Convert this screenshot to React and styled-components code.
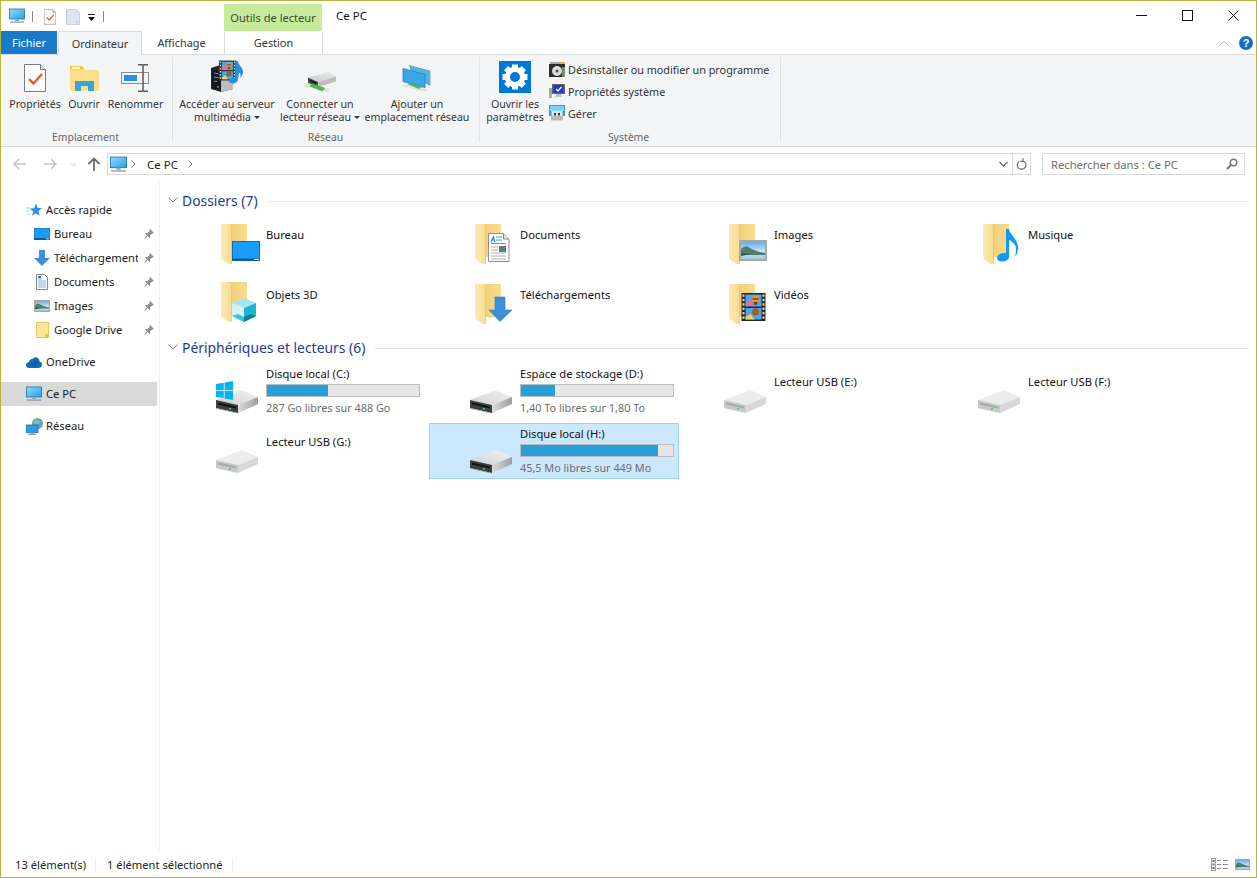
import React from 'react';
import styled, { createGlobalStyle } from 'styled-components';

const Global = createGlobalStyle`
  html, body { margin: 0; padding: 0; background: #fff; }
  body { font-family: "Noto Sans", "Open Sans", sans-serif; font-size: 11.2px; color: #111; }
  * { box-sizing: border-box; }
`;

const Win = styled.div`
  width: 1257px; height: 878px; border: 1px solid #b3b83c; display: flex; flex-direction: column; background: #fff; overflow: hidden;
`;
const TitleBar = styled.div`display: flex; height: 30px; align-items: stretch; flex: none;`;
const Qat = styled.div`display: flex; align-items: center; width: 223px; padding-left: 8px; flex: none;`;
const QatIcon = styled.span`display: flex; margin-left: ${p => p.$ml || 0}px; margin-top: ${p => p.$mt || 0}px;`;
const QatSep = styled.span`width: 1px; height: 11px; background: #8a8a8a; margin-left: ${p => p.$ml}px;`;
const ContextCap = styled.div`
  margin-top: 3px; width: 98px; background: #c5eb9b; color: #3f4a33; display: flex; align-items: center; justify-content: center; font-size: 11.1px; flex: none; padding-bottom: 1px;
`;
const TitleText = styled.div`margin-left: 14px; font-size: 11.5px; color: #111; display: flex; align-items: center; flex: 1; padding-bottom: 1px;`;
const WinBtn = styled.div`width: 46px; display: flex; align-items: center; justify-content: center; flex: none; padding-bottom: 2px;`;

const TabRow = styled.div`display: flex; height: 24px; flex: none; border-bottom: 1px solid #dadbdc; position: relative; align-items: stretch; font-size: 10.9px;`;
const FileTab = styled.div`width: 56px; height: 23px; background: #1979ca; color: #fff; display: flex; align-items: center; justify-content: center; flex: none; padding-bottom: 1px;`;
const Tab = styled.div`
  width: ${p => p.$w}px; margin-left: ${p => p.$ml || 0}px; display: flex; align-items: center; justify-content: center; color: #333; flex: none; padding: 0 ${p => p.$pr || 0}px 1px 0;
  height: ${p => p.$active ? 24 : 23}px; z-index: 1;
  background: ${p => p.$active ? '#f4f5f7' : '#fff'};
  border: 1px solid ${p => p.$active || p.$frame ? '#dadbdc' : 'transparent'};
  border-top-color: ${p => p.$active ? '#dadbdc' : 'transparent'};
  border-bottom: none;
`;
const TabEnd = styled.div`margin-left: auto; display: flex; align-items: center; gap: 10px; padding-right: 3px; height: 23px;`;

const Ribbon = styled.div`display: flex; height: 92px; flex: none; background: #f4f5f7; border-bottom: 1px solid #dadbdc;`;
const Group = styled.div`
  width: ${p => p.$w}px; flex: none; display: flex; flex-direction: column; position: relative; padding: 5px 0 0 ${p => p.$pl}px;
  &::after { content: ""; position: absolute; right: 0; top: 2px; bottom: 4px; width: 1px; background: #e2e3e4; }
`;
const GroupBody = styled.div`display: flex; flex: 1;`;
const GroupLabel = styled.div`height: 16px; margin-left: -${p => p.$pl}px; padding-right: ${p => p.$pr}px; text-align: center; color: #666; font-size: 10.4px; line-height: 14px;`;
const BigBtn = styled.div`width: ${p => p.$w}px; flex: none; display: flex; flex-direction: column; align-items: center; color: #333;`;
const BigIcon = styled.div`height: ${p => 32 + (p.$drop || 0)}px; margin-bottom: ${p => 6 - (p.$drop || 0)}px; display: flex; align-items: flex-end; justify-content: center;`;
const BigLabel = styled.div`font-size: 10.6px; line-height: 13px; text-align: center; white-space: nowrap;`;
const Caret = styled.span`display: inline-block; width: 0; height: 0; border: 3px solid transparent; border-top: 3px solid #333; border-bottom: none; margin-left: 3px; vertical-align: 2px;`;
const SmallList = styled.div`display: flex; flex-direction: column; margin-top: -2px; margin-left: 4px;`;
const SmallRow = styled.div`display: flex; align-items: center; height: 22px; gap: 3px; color: #333; font-size: 10.8px; white-space: nowrap;`;

const AddressBar = styled.div`display: flex; height: 34px; flex: none; align-items: center; padding: 0 12px 0 12px;`;
const Nav = styled.div`width: 94px; display: flex; align-items: center; flex: none; height: 22px;`;
const NavBtn = styled.span`display: flex; flex: none; width: ${p => p.$w}px; margin-left: ${p => p.$ml || 0}px; justify-content: center;`;
const Breadcrumb = styled.div`
  width: 924px; height: 22px; border: 1px solid #d9d9d9; display: flex; align-items: center; padding-left: 1px; flex: none; color: #222; font-size: 11.5px;
`;
const Crumb = styled.span`margin: 0 ${p => p.$mr || 0}px 0 ${p => p.$ml || 0}px; display: flex; align-items: center;`;
const BreadEnd = styled.div`margin-left: auto; display: flex; align-items: center; height: 100%;`;
const BreadDrop = styled.span`width: 18px; display: flex; justify-content: center; padding-left: 1px;`;
const BreadRefresh = styled.span`width: 18px; height: 100%; border-left: 1px solid #d9d9d9; display: flex; align-items: center; justify-content: center;`;
const Search = styled.div`
  margin-left: 11px; width: 203px; height: 22px; border: 1px solid #d9d9d9; display: flex; align-items: center; justify-content: space-between; padding: 0 6px 0 8px; color: #6d6d6d; flex: none;
`;

const Main = styled.div`flex: 1; display: flex; min-height: 0;`;
const Sidebar = styled.nav`width: 159px; flex: none; border-right: 1px solid #f0f0f0; padding: 17px 2px 0 0; display: flex; flex-direction: column;`;
const SideRow = styled.div`
  height: 24px; flex: none; display: flex; align-items: center; padding-left: ${p => p.$sub ? 32 : 24}px; padding-right: 3px;
  gap: 3px; margin-top: ${p => p.$gap || 0}px; background: ${p => p.$sel ? '#d9d9d9' : 'transparent'}; color: #1a1a1a;
`;
const SideIcon = styled.span`width: 18px; height: 18px; display: flex; align-items: center; justify-content: center; flex: none;`;
const SideLabel = styled.span`flex: 1; overflow: hidden; white-space: nowrap; min-width: 0; padding-bottom: 2px;`;
const PinBox = styled.span`width: 10px; flex: none; display: flex; margin-left: 3px;`;

const Content = styled.main`flex: 1; padding: 9px 7px 0 0; min-width: 0;`;
const SectionHead = styled.div`
  height: 20px; display: flex; align-items: center; padding-left: 8px; margin-top: ${p => p.$mt || 0}px; color: #1e3a94; font-size: 13.9px; white-space: nowrap;
  span { margin-left: 4px; }
  &::after { content: ""; flex: 1; height: 1px; background: #e5e5e5; margin-left: 10px; margin-top: 2px; }
`;
const Grid = styled.div`display: grid; grid-template-columns: repeat(4, 250px); gap: 4px; padding: 6px 0 0 15px;`;
const Tile = styled.div`
  height: 56px; display: flex; padding: 3px 0 0 38px; gap: 4px; border: 1px solid ${p => p.$sel ? '#99d1ff' : 'transparent'};
  background: ${p => p.$sel ? '#cce8ff' : 'transparent'};
`;
const TileIcon = styled.div`width: 48px; height: 48px; flex: none;`;
const TileText = styled.div`margin-top: ${p => p.$top}px; line-height: 16px; color: #111; min-width: 0; white-space: nowrap;`;
const Bar = styled.div`width: 154px; height: 13px; border: 1px solid #bcbcbc; background: #e6e6e6; margin: 2px 0 3px; display: flex;`;
const BarFill = styled.div`height: 100%; background: #26a0da;`;
const Free = styled.div`color: #6d6d6d; line-height: 15px; font-size: 10.85px;`;

const StatusBar = styled.div`height: 24px; flex: none; display: flex; align-items: center; padding: 0 6px 2px 14px; color: #222;`;
const StatusItem = styled.span`padding-right: ${p => p.$pr}px; margin-right: ${p => p.$mr}px; position: relative; white-space: nowrap;
  &::after { content: ""; position: absolute; right: 0; top: 1px; bottom: 1px; width: 1px; background: #ececec; }
`;
const ViewIcons = styled.div`margin-left: auto; display: flex; gap: 7px; align-items: center;`;

/* ---------- drawings ---------- */
const Pc = ({ s = 16 }) => (
  <svg width={s} height={s} viewBox="0 0 16 16">
    <defs><linearGradient id="pcg" x1="0" y1="0" x2="1" y2="1"><stop offset="0" stopColor="#8fdcfb" /><stop offset="1" stopColor="#2a9fe6" /></linearGradient></defs>
    <rect x="0.5" y="1" width="15" height="10" fill="url(#pcg)" stroke="#1c6f9e" strokeWidth="0.8" />
    <rect x="6" y="11" width="4" height="2" fill="#9aa4ab" />
    <rect x="1" y="13.5" width="14" height="1.2" fill="#7f98a8" />
  </svg>
);
const CheckDoc = ({ w = 22, h = 28 }) => (
  <svg width={w} height={h} viewBox="0 0 22 28">
    <path d="M.5.5h16l5 5v22H.5z" fill="#fdfdfd" stroke="#7b7b7b" />
    <path d="M16.5.5v5h5" fill="#e6e6e6" stroke="#7b7b7b" />
    <path d="M5 15l4.5 4.5L18 10" fill="none" stroke="#ea5a25" strokeWidth="2.4" />
  </svg>
);
const BlankDoc = () => (
  <svg width="14" height="16" viewBox="0 0 14 16"><path d="M.5.5h10l3 3v12H.5z" fill="#dbe5f3" stroke="#c5d0e0" /><path d="M10 16v-4h4" fill="#c9d6e8" /></svg>
);
const OpenFolder = () => (
  <svg width="29" height="26" viewBox="0 0 29 26">
    <path d="M0 2h11l2 2h16v21H0z" fill="#fbe08c" />
    <path d="M0 0h12l3 3.5H0z" fill="#f4c83f" />
    <rect x="2" y="1" width="8" height="2" fill="#fff6d0" />
    <path d="M5 25v-10h19v10h-6v-5h-7v5z" fill="#37a6dc" />
  </svg>
);
const Rename = () => (
  <svg width="29" height="28" viewBox="0 0 29 28">
    <rect x="0.5" y="8.5" width="27" height="11" fill="#f7f7f7" stroke="#8a8a8a" />
    <rect x="3" y="11" width="13" height="6" fill="#2a8fe6" />
    <path d="M17 .8h4.2l.8.9.8-.9H27M22 2v24M17 27.2h4.2l.8-.9.8.9H27" fill="none" stroke="#5a5a5a" strokeWidth="1.5" />
  </svg>
);
const Film = ({ x, y, w, h }) => {
  const holes = [];
  for (let i = 0; i < 6; i++) holes.push(<rect key={i} x={1} y={1.4 + i * 4.4} width={2} height={2.4} fill="#d8d3c4" />, <rect key={'r' + i} x={21} y={1.4 + i * 4.4} width={2} height={2.4} fill="#d8d3c4" />);
  return (
    <svg x={x} y={y} width={w} height={h} viewBox="0 0 24 28">
      <rect width="24" height="28" fill="#262626" />
      {holes}
      <rect x="4" y="1.5" width="16" height="12" fill="#4aa8e8" />
      <rect x="4" y="15" width="16" height="11.5" fill="#4aa8e8" />
      <path d="M4 10l5-3 5 6H4z" fill="#e86d9a" />
      <circle cx="14" cy="6" r="3.6" fill="#e0a020" /><path d="M11 5h6v2h-6z" fill="#c83a20" />
      <path d="M12 9h4l-1.2 3h-1.6z" fill="#5a3a10" />
      <circle cx="14" cy="19" r="3.6" fill="#dd3a20" /><path d="M11 18h6v2h-6z" fill="#20a040" />
      <path d="M4 24l5-3 4 5.5H4z" fill="#f0d060" />
    </svg>
  );
};
const Media = () => (
  <svg width="33" height="32" viewBox="0 0 33 32">
    <path d="M0 8l9-3 13 4v20l-12 3-10-3z" fill="#23272e" />
    <path d="M10 10l12-1v20l-12 3z" fill="#b9bcc1" />
    <path d="M1 10l9 2v19l-9-3z" fill="#14171c" />
    <path d="M3 13l5 1M3 17l5 1M3 21l3 .6" stroke="#3aa0ea" strokeWidth="1" />
    <circle cx="7" cy="27" r=".9" fill="#3aa0ea" />
    <Film x={8} y={0} w={17} h={21} />
    <path d="M27 1c0 4 5 6 5 11 0 3-2 5-3 6 .6-2 1-4-.8-5.500L27 19c0 3-3 4.500-5.500 4.500-2 0-3.500-1-3.500-2.500 0-2.500 3-4 6-3.500l.3-16.500z" fill="#1f94e6" />
  </svg>
);
const IsoDrive = () => (
  <svg width="32" height="20" viewBox="0 0 32 20">
    <defs><linearGradient id="isot" x1="0" y1="1" x2="1" y2="0"><stop offset="0" stopColor="#c9caca" /><stop offset="1" stopColor="#ececec" /></linearGradient></defs>
    <path d="M4 5.500L24 0l8 4.500-18 5.500z" fill="url(#isot)" />
    <path d="M14 10l18-5.500v5L14 15z" fill="#bdbebe" />
    <path d="M4 5.500L14 10v5L4 11z" fill="#4a4e4e" />
    <path d="M5.500 7.500l7 3v1.500l-7-3z" fill="#161616" />
    <path d="M0 13.500l3-1.500 3 1 14 4 3-1 3 1.500-2.500 2.500-3-1-2.500.8-2.500-1-11-3.300-2 .5z" fill="#dde0dc" />
    <path d="M6 13l3-1 11 3.500 1 1.500-3 2-12-4.500z" fill="#4db848" />
  </svg>
);
const NetAdd = () => (
  <svg width="30" height="27" viewBox="0 0 30 27">
    <path d="M7 .5l21 5.500v14l-2-.5z" fill="#7fbcd8" stroke="#4b7f9b" strokeWidth=".6" />
    <path d="M8 1.500l20 5v13l-20-5z" fill="#4db4e9" />
    <path d="M1 3.500l22 6v13l-22-6z" fill="#39a8e8" stroke="#2a7ca8" strokeWidth=".8" />
    <path d="M1 20l4-1 15 5 3-1 3 2-3 1.500-3-1-3 .5-12-4-2 .5-3-1z" fill="#dfe2dd" />
    <path d="M5 19l3-1 12 4.500-3 1.500z" fill="#4db848" />
  </svg>
);
const Gear = () => {
  const teeth = [0, 45, 90, 135, 180, 225, 270, 315].map(a => (
    <rect key={a} x="13" y="3.500" width="6" height="6.500" fill="#fff" transform={`rotate(${a} 16 16)`} />
  ));
  return (
    <svg width="32" height="32" viewBox="0 0 32 32">
      <rect width="32" height="32" fill="#0078d7" />
      {teeth}
      <circle cx="16" cy="16" r="7.600" fill="none" stroke="#fff" strokeWidth="5.200" />
    </svg>
  );
};
const Uninstall = () => (
  <svg width="16" height="16" viewBox="0 0 16 16">
    <rect x="1" y="1" width="14" height="3" fill="#a8a8a8" /><rect x="11" y="1" width="5" height="6" fill="#f0b040" />
    <rect y="3" width="16" height="13" fill="#2c2c2c" /><circle cx="8" cy="10" r="5" fill="#dcdcdc" /><circle cx="8" cy="10" r="1.500" fill="#555" />
    <rect x="13" y="6" width="3" height="10" fill="#6f8f6a" />
  </svg>
);
const SysProps = () => (
  <svg width="16" height="16" viewBox="0 0 16 16">
    <rect x="0" y="5" width="3" height="10" fill="#b0b0b0" /><rect x=".8" y="6" width="1.400" height="5" fill="#5cc05c" />
    <rect x="3" y="1" width="13" height="10" fill="#666" /><rect x="4.500" y="2" width="10" height="8" fill="#2436c8" />
    <path d="M7 6l2 2 3.500-4" fill="none" stroke="#fff" strokeWidth="1.400" />
    <path d="M7 11h5l1 3H6z" fill="#c2c2c2" />
  </svg>
);
const Manage = () => (
  <svg width="16" height="16" viewBox="0 0 16 16">
    <rect width="16" height="11" fill="#2f9de0" /><rect x="1" y="1" width="14" height="5" fill="#7fd0f5" />
    <path d="M2 6h12v9.500H2z" fill="#b8b8b8" /><rect x="3" y="6" width="10" height="5" fill="#e4e4e4" />
    <rect x="5" y="8" width="2" height="2.500" fill="#333" /><rect x="9" y="8" width="2" height="2.500" fill="#333" />
  </svg>
);
const Pin = () => (
  <svg width="10" height="10" viewBox="0 0 10 10"><path d="M6 0l4 4-1 .6-1-.2L6 6.500l.2 1.500-.8.8L3.800 7 1 9.800.3 9.200 3 6.300 1.200 4.500 2 3.700l1.500.2L5.600 2l-.2-1z" fill="#8e8e8e" /></svg>
);
const Star = () => (
  <svg width="16" height="15" viewBox="0 0 16 15">
    <path d="M10 .5l1.600 4.300L16 5.200l-3.400 2.900 1 4.600L9.700 10.300 6 13l1.200-4.500-3.500-3 4.500-.2z" fill="#2f8fe0" />
    <path d="M0 5h4M0 8h3.500M1 11h3" stroke="#9ac7ee" strokeWidth="1" />
  </svg>
);
const Desk = () => (
  <svg width="16" height="12" viewBox="0 0 16 12"><rect width="16" height="12" fill="#1a9cff" stroke="#0a5f9e" strokeWidth=".8" /><rect y="10" width="16" height="2" fill="#0b5d96" /><rect x="12" y="10.500" width="3" height=".8" fill="#fff" /></svg>
);
const DownArrow = ({ s = 16 }) => (
  <svg width={s} height={s} viewBox="0 0 16 16"><path d="M5 0h6v8h5l-8 8-8-8h5z" fill="#3b8fdd" /></svg>
);
const DocSmall = () => (
  <svg width="12" height="16" viewBox="0 0 12 16"><path d="M.5.5h8l3 3v12H.5z" fill="#fff" stroke="#8a8a8a" /><path d="M2 5h4M2 7h8M2 9h8M2 11h8M2 13h8" stroke="#5b9bd5" strokeWidth=".8" /><rect x="2" y="2" width="3" height="2" fill="#2a7ed0" /></svg>
);
const Landscape = ({ w = 16, h = 12 }) => (
  <svg width={w} height={h} viewBox="0 0 28 21">
    <defs><linearGradient id="skyg" x1="0" y1="0" x2="0" y2="1"><stop offset="0" stopColor="#5fa6e6" /><stop offset=".55" stopColor="#cfe4f2" /><stop offset="1" stopColor="#9cc7d8" /></linearGradient></defs>
    <rect x="1" y="1" width="26" height="19" fill="url(#skyg)" stroke="#a8a8a8" strokeWidth="2" />
    <path d="M2 9c4-3 6-3 9-1 4 2 8 4 15 5v2H2z" fill="#4f7f6c" />
    <path d="M2 13l10 1-10 2z" fill="#2d5a50" />
  </svg>
);
const YellowPage = () => (
  <svg width="13" height="16" viewBox="0 0 13 16"><path d="M.5.5h12v15H.5z" fill="#fde79a" stroke="#e8c75a" /><rect x="9" y="12" width="4" height="4" fill="#e8c75a" /></svg>
);
const Cloud = () => (
  <svg width="16" height="11" viewBox="0 0 16 11"><path d="M3 11C1 11 0 9.500 0 8c0-1.600 1.200-2.800 2.700-2.800C3.300 3 5 1.800 6.700 1.800 8 .6 9.500 0 10.700.4c1.800.6 2.900 2.300 2.800 4C15 4.700 16 6 16 7.600c0 1.800-1.300 3.400-3.200 3.400z" fill="#0f6cbd" /><path d="M6 7.500L10.500 3 13.500 5.500 8 10.800z" fill="#0a4f9a" opacity=".5" /></svg>
);
const Network = () => (
  <svg width="17" height="17" viewBox="0 0 17 17">
    <circle cx="11.500" cy="5.500" r="5.500" fill="#5aa3e0" /><path d="M8 3c2-2 5-1 6 1-1 2-3 2-4 3-1 0-2-2-2-4z" fill="#8ec36b" />
    <rect x="0" y="7" width="12" height="7.500" fill="#2a9fe6" stroke="#1c6f9e" strokeWidth=".8" />
    <rect x="4" y="14.500" width="4" height="1.200" fill="#8a9aa4" /><rect x="2" y="15.800" width="8" height="1" fill="#6f8896" />
  </svg>
);

const Overlays = {
  desktop: (<g><rect x="18.500" y="21.500" width="27" height="19" fill="#1a9cff" stroke="#0a6fb8" /><rect x="18" y="38.500" width="28" height="2.500" fill="#0b5d96" /><rect x="40" y="39" width="5" height="1" fill="#fff" /></g>),
  doc: (
    <g>
      <path d="M20.500 13.500h15l5.500 5.500v22.500H20.500z" fill="#fff" stroke="#8f8f8f" />
      <path d="M35.500 13.500v5.500h5.500" fill="#e4e4e4" stroke="#8f8f8f" />
      <path d="M23 22l2.500-5 1 5" fill="none" stroke="#2e7fd0" strokeWidth="1.300" />
      <path d="M28 17h6M28 20h6M23 23.500h15" stroke="#3fa0dc" strokeWidth="1" />
      <path d="M23 27h7M23 30h7M23 33h15M23 36h15M23 39h15" stroke="#b0b0b0" strokeWidth="1" />
      <rect x="31" y="26" width="7" height="6" fill="#5b7f7f" />
    </g>
  ),
  note: (<path d="M30 9h3c.5 5 8.500 10 9 18 .2 4-1 7-3 10 1-4 1.500-8 .5-11-1-2.500-4-5-6.500-6v17c0 3-3.500 4.500-7 4.500-3 0-5-1.200-5-3.500 0-3.500 4.500-5.500 9-4.800z" fill="#0f9cf0" />),
  cube: (
    <g>
      <path d="M18 25l12-5 12 5-12 5z" fill="#a8e6ef" />
      <path d="M18 25l12 5v14L18 38z" fill="#d5f2f5" />
      <path d="M30 30l12-5v13l-12 6z" fill="#19b6d2" />
      <path d="M18 38l6-2 6 3v5z" fill="#35c5dc" />
      <path d="M30 44v-5l6-3 6 2z" fill="#0b7f95" />
    </g>
  ),
  arrow: (<path d="M27 17h10v13h7L32 41.500 21 30h6z" fill="#3b8fdd" stroke="#2b78c4" strokeWidth=".6" />),
};

const Folder = ({ kind, dy = 0 }) => (
  <svg width="48" height="48" viewBox="0 0 48 48">
    <defs>
      <linearGradient id="fb" x1="0" y1="0" x2="1" y2="0"><stop offset="0" stopColor="#f1cd73" /><stop offset="1" stopColor="#f8dd8d" /></linearGradient>
      <linearGradient id="ff" x1="0" y1="0" x2="1" y2="0"><stop offset="0" stopColor="#fdeab3" /><stop offset="1" stopColor="#f9dd91" /></linearGradient>
    </defs>
    <g transform={`translate(0 ${dy})`}>
      <rect x="12" y="4" width="21" height="33" fill="url(#fb)" />
      <path d="M7 4h9v1l1 1v38l-3-.2-7-5z" fill="url(#ff)" />
      <path d="M16 4v1l1 1v38l.8-.2V8z" fill="#e8c670" />
      {kind === 'image' && (<svg x="17" y="20" width="28" height="21" viewBox="0 0 28 21"><Landscape w={28} h={21} /></svg>)}
      {kind === 'film' && <Film x={19} y={13} w={25} h={28} />}
      {Overlays[kind]}
    </g>
  </svg>
);

const Drive = ({ win, usb }) => (
  <svg width="48" height="48" viewBox="0 0 48 48">
    <defs>
      <linearGradient id="dt" x1="0" y1="1" x2="1" y2="0"><stop offset="0" stopColor="#cfcfcf" /><stop offset="1" stopColor="#f4f4f4" /></linearGradient>
      <linearGradient id="ds" x1="0" y1="0" x2="1" y2="0"><stop offset="0" stopColor="#dcdcdc" /><stop offset="1" stopColor="#9d9d9d" /></linearGradient>
    </defs>
    <path d="M2 33l26-10 16 7-20 8z" fill={usb ? '#ececec' : 'url(#dt)'} />
    <path d="M24 38l20-8v7l-20 9z" fill={usb ? '#d8d8d8' : 'url(#ds)'} />
    <path d="M2 33l22 5v8L2 41z" fill={usb ? '#c8c8c8' : '#3a3f3f'} />
    <path d="M4 35.500l18 4v2L4 37.500z" fill={usb ? '#a9a9a9' : '#141414'} />
    <path d="M2 41l22 5v.6L2 41.800z" fill={usb ? '#e8e8e8' : '#9a9a9a'} />
    <rect x="15" y="41" width="2" height="1.500" fill="#4fd04f" />
    {win && (
      <g fill="#00b4f0">
        <path d="M2 17l7.800-1.300v7.300H2z" /><path d="M10.600 15.600L19 14v9h-8.400z" />
        <path d="M2 23.800h7.800v7.300L2 30z" /><path d="M10.600 23.800H19V33l-8.400-1.500z" />
      </g>
    )}
  </svg>
);

const folders = [
  ['Bureau', 'desktop'], ['Documents', 'doc'], ['Images', 'image'], ['Musique', 'note'],
  ['Objets 3D', 'cube', -2], ['Téléchargements', 'arrow'], ['Vidéos', 'film'],
];
const drives = [
  { n: 'Disque local (C:)', win: true, pct: 40.3, free: '287 Go libres sur 488 Go' },
  { n: 'Espace de stockage (D:)', pct: 22.5, free: '1,40 To libres sur 1,80 To' },
  { n: 'Lecteur USB (E:)', usb: true },
  { n: 'Lecteur USB (F:)', usb: true },
  { n: 'Lecteur USB (G:)', usb: true },
  { n: 'Disque local (H:)', pct: 90, free: '45,5 Mo libres sur 449 Mo', sel: true },
];
const quick = [
  ['Bureau', <Desk />], ['Téléchargements', <DownArrow />], ['Documents', <DocSmall />], ['Images', <Landscape />], ['Google Drive', <YellowPage />],
];

const SectionChevron = () => (
  <svg width="10" height="6" viewBox="0 0 10 6"><path d="M.5.500L5 5 9.500.500" fill="none" stroke="#8a8a8a" /></svg>
);
const CrumbChevron = () => (
  <svg width="5" height="8" viewBox="0 0 5 8"><path d="M.5.500L4 4 .5 7.500" fill="none" stroke="#6d6d6d" /></svg>
);

export default function App() {
  return (
    <Win>
      <Global />
      <TitleBar>
        <Qat>
          <QatIcon><Pc /></QatIcon>
          <QatSep $ml={7} />
          <QatIcon $ml={11} $mt={1}><CheckDoc w={12} h={16} /></QatIcon>
          <QatIcon $ml={10} $mt={1}><BlankDoc /></QatIcon>
          <QatIcon $ml={8} $mt={3}>
            <svg width="7" height="7" viewBox="0 0 7 7"><path d="M0 0h7v1H0zM0 3h7L3.500 7z" fill="#111" /></svg>
          </QatIcon>
          <QatSep $ml={8} />
        </Qat>
        <ContextCap>Outils de lecteur</ContextCap>
        <TitleText>Ce PC</TitleText>
        <WinBtn><svg width="11" height="11" viewBox="0 0 11 11"><path d="M0 5.500h11" stroke="#111" /></svg></WinBtn>
        <WinBtn><svg width="11" height="11" viewBox="0 0 11 11"><rect x=".5" y=".5" width="10" height="10" fill="none" stroke="#111" /></svg></WinBtn>
        <WinBtn><svg width="11" height="11" viewBox="0 0 11 11"><path d="M.5.500l10 10M10.500.500l-10 10" stroke="#111" strokeWidth="1" /></svg></WinBtn>
      </TitleBar>
      <TabRow>
        <FileTab>Fichier</FileTab>
        <Tab $w={84} $ml={1} $active>Ordinateur</Tab>
        <Tab $w={82} $pr={3}>Affichage</Tab>
        <Tab $w={99} $frame>Gestion</Tab>
        <TabEnd>
          <svg width="10" height="6" viewBox="0 0 10 6"><path d="M.5 5.500L5 1l4.500 4.500" fill="none" stroke="#b8b8b8" /></svg>
          <svg width="14" height="14" viewBox="0 0 14 14"><circle cx="7" cy="7" r="7" fill="#1170c8" /><text x="7" y="11" textAnchor="middle" fontSize="11" fontWeight="700" fill="#fff" fontFamily="Liberation Sans">?</text></svg>
        </TabEnd>
      </TabRow>
      <Ribbon>
        <Group $w={172} $pl={6}>
          <GroupBody>
            <BigBtn $w={56}><BigIcon><CheckDoc /></BigIcon><BigLabel>Propriétés</BigLabel></BigBtn>
            <BigBtn $w={42}><BigIcon><OpenFolder /></BigIcon><BigLabel>Ouvrir</BigLabel></BigBtn>
            <BigBtn $w={61}><BigIcon><Rename /></BigIcon><BigLabel>Renommer</BigLabel></BigBtn>
          </GroupBody>
          <GroupLabel $pl={6} $pr={3}>Emplacement</GroupLabel>
        </Group>
        <Group $w={307} $pl={4}>
          <GroupBody>
            <BigBtn $w={100}><BigIcon><Media /></BigIcon><BigLabel>Accéder au serveur<br />multimédia<Caret /></BigLabel></BigBtn>
            <BigBtn $w={86}><BigIcon><IsoDrive /></BigIcon><BigLabel>Connecter un<br />lecteur réseau<Caret /></BigLabel></BigBtn>
            <BigBtn $w={108}><BigIcon><NetAdd /></BigIcon><BigLabel>Ajouter un<br />emplacement réseau</BigLabel></BigBtn>
          </GroupBody>
          <GroupLabel $pl={4} $pr={2}>Réseau</GroupLabel>
        </Group>
        <Group $w={301} $pl={5}>
          <GroupBody>
            <BigBtn $w={60}><BigIcon $drop={1}><Gear /></BigIcon><BigLabel>Ouvrir les<br />paramètres</BigLabel></BigBtn>
            <SmallList>
              <SmallRow><Uninstall />Désinstaller ou modifier un programme</SmallRow>
              <SmallRow><SysProps />Propriétés système</SmallRow>
              <SmallRow><Manage />Gérer</SmallRow>
            </SmallList>
          </GroupBody>
          <GroupLabel $pl={5} $pr={4}>Système</GroupLabel>
        </Group>
      </Ribbon>
      <AddressBar>
        <Nav>
          <NavBtn $w={14}><svg width="14" height="12" viewBox="0 0 14 12"><path d="M6 1L1 6l5 5M1 6h12" fill="none" stroke="#c4c4c4" strokeWidth="1.500" /></svg></NavBtn>
          <NavBtn $w={14} $ml={16}><svg width="14" height="12" viewBox="0 0 14 12"><path d="M8 1l5 5-5 5M13 6H1" fill="none" stroke="#c4c4c4" strokeWidth="1.500" /></svg></NavBtn>
          <NavBtn $w={6} $ml={13}><svg width="6" height="5" viewBox="0 0 6 5"><path d="M.5 1L3 3.500 5.500 1" fill="none" stroke="#c4c4c4" /></svg></NavBtn>
          <NavBtn $w={14} $ml={11}><svg width="14" height="14" viewBox="0 0 14 14"><path d="M1.500 7L7 1.500 12.500 7M7 2v12" fill="none" stroke="#6d6d6d" strokeWidth="1.800" /></svg></NavBtn>
        </Nav>
        <Breadcrumb>
          <Crumb $ml={1}><Pc s={17} /></Crumb>
          <Crumb $ml={4} $mr={11}><CrumbChevron /></Crumb>
          <Crumb>Ce PC</Crumb>
          <Crumb $ml={10}><CrumbChevron /></Crumb>
          <BreadEnd>
            <BreadDrop><svg width="9" height="6" viewBox="0 0 9 6"><path d="M.5 1L4.500 5l4-4" fill="none" stroke="#6d6d6d" strokeWidth="1.300" /></svg></BreadDrop>
            <BreadRefresh><svg width="11" height="12" viewBox="0 0 11 12"><path d="M3 3.500a4.300 4.300 0 1 0 4-.6M7 .2v3.200H3.800" fill="none" stroke="#777" strokeWidth="1.300" /></svg></BreadRefresh>
          </BreadEnd>
        </Breadcrumb>
        <Search>
          Rechercher dans : Ce PC
          <svg width="12" height="12" viewBox="0 0 12 12"><circle cx="7.500" cy="4.500" r="3.300" fill="none" stroke="#777" strokeWidth="1.400" /><path d="M5 7l-4 4" stroke="#777" strokeWidth="2" /></svg>
        </Search>
      </AddressBar>
      <Main>
        <Sidebar>
          <SideRow><SideIcon><Star /></SideIcon><SideLabel>Accès rapide</SideLabel></SideRow>
          {quick.map(([n, ic]) => (
            <SideRow key={n} $sub>
              <SideIcon>{ic}</SideIcon>
              <SideLabel>{n}</SideLabel>
              <PinBox><Pin /></PinBox>
            </SideRow>
          ))}
          <SideRow $gap={8}><SideIcon><Cloud /></SideIcon><SideLabel>OneDrive</SideLabel></SideRow>
          <SideRow $gap={8} $sel><SideIcon><Pc /></SideIcon><SideLabel>Ce PC</SideLabel></SideRow>
          <SideRow $gap={8}><SideIcon><Network /></SideIcon><SideLabel>Réseau</SideLabel></SideRow>
        </Sidebar>
        <Content>
          <SectionHead>
            <SectionChevron />
            <span>Dossiers (7)</span>
          </SectionHead>
          <Grid>
            {folders.map(([n, k, dy]) => (
              <Tile key={n}>
                <TileIcon><Folder kind={k} dy={dy || 0} /></TileIcon>
                <TileText $top={7}>{n}</TileText>
              </Tile>
            ))}
          </Grid>
          <SectionHead $mt={5}>
            <SectionChevron />
            <span>Périphériques et lecteurs (6)</span>
          </SectionHead>
          <Grid>
            {drives.map(d => (
              <Tile key={d.n} $sel={d.sel}>
                <TileIcon><Drive win={d.win} usb={d.usb} /></TileIcon>
                <TileText $top={d.usb ? 7 : -1}>
                  {d.n}
                  {d.pct && (<>
                    <Bar><BarFill style={{ width: `${d.pct}%` }} /></Bar>
                    <Free>{d.free}</Free>
                  </>)}
                </TileText>
              </Tile>
            ))}
          </Grid>
        </Content>
      </Main>
      <StatusBar>
        <StatusItem $pr={10} $mr={11}>13 élément(s)</StatusItem>
        <StatusItem $pr={10} $mr={0}>1 élément sélectionné</StatusItem>
        <ViewIcons>
          <svg width="17" height="13" viewBox="0 0 17 13">
            <rect x=".5" y=".5" width="4" height="12" fill="#fff" stroke="#a0a0a0" />
            <rect x="1.500" y="2" width="2" height="2" fill="#4a7fb5" /><rect x="1.500" y="5.500" width="2" height="2" fill="#777" /><rect x="1.500" y="9" width="2" height="2" fill="#d04040" />
            <path d="M6 2.500h4M12 2.500h5M6 6.500h4M12 6.500h5M6 10.500h4M12 10.500h5" stroke="#8a8a8a" />
          </svg>
          <Landscape w={15} h={13} />
        </ViewIcons>
      </StatusBar>
    </Win>
  );
}
